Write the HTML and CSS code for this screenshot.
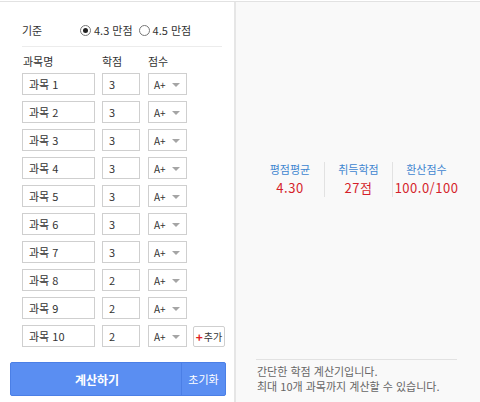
FILE: index.html
```html
<!DOCTYPE html>
<html lang="ko">
<head>
<meta charset="utf-8">
<link rel="stylesheet" href="styles.css">
</head>
<body>
<div class="wrap">
  <div class="left">
    <div class="basis">
      <span class="basis-label">기준</span>
      <span class="radio checked"></span><span class="radio-text">4.3 만점</span>
      <span class="radio"></span><span class="radio-text">4.5 만점</span>
    </div>
    <div class="heads">
      <span class="h-name">과목명</span>
      <span class="h-credit">학점</span>
      <span class="h-grade">점수</span>
    </div>
    <div class="rows">
      <div class="row"><div class="inp name">과목 1</div><div class="inp credit">3</div><div class="sel">A+<span class="caret"></span></div></div>
      <div class="row"><div class="inp name">과목 2</div><div class="inp credit">3</div><div class="sel">A+<span class="caret"></span></div></div>
      <div class="row"><div class="inp name">과목 3</div><div class="inp credit">3</div><div class="sel">A+<span class="caret"></span></div></div>
      <div class="row"><div class="inp name">과목 4</div><div class="inp credit">3</div><div class="sel">A+<span class="caret"></span></div></div>
      <div class="row"><div class="inp name">과목 5</div><div class="inp credit">3</div><div class="sel">A+<span class="caret"></span></div></div>
      <div class="row"><div class="inp name">과목 6</div><div class="inp credit">3</div><div class="sel">A+<span class="caret"></span></div></div>
      <div class="row"><div class="inp name">과목 7</div><div class="inp credit">3</div><div class="sel">A+<span class="caret"></span></div></div>
      <div class="row"><div class="inp name">과목 8</div><div class="inp credit">2</div><div class="sel">A+<span class="caret"></span></div></div>
      <div class="row"><div class="inp name">과목 9</div><div class="inp credit">2</div><div class="sel">A+<span class="caret"></span></div></div>
      <div class="row"><div class="inp name">과목 10</div><div class="inp credit">2</div><div class="sel">A+<span class="caret"></span></div><div class="add"><span class="plus">+</span>추가</div></div>
    </div>
    <div class="btns">
      <div class="calc">계산하기</div>
      <div class="reset">초기화</div>
    </div>
  </div>
  <div class="right">
    <div class="stats">
      <div class="stat"><div class="s-label">평점평균</div><div class="s-val">4.30</div></div>
      <div class="stat"><div class="s-label">취득학점</div><div class="s-val">27점</div></div>
      <div class="stat"><div class="s-label">환산점수</div><div class="s-val">100.0/100</div></div>
    </div>
    <div class="foot">
      <p>간단한 학점 계산기입니다.</p>
      <p>최대 10개 과목까지 계산할 수 있습니다.</p>
    </div>
  </div>
</div>
</body>
</html>
```

FILE: styles.css
```css
* { box-sizing: border-box; }
html, body { margin: 0; padding: 0; background: #fff; }
body {
  font-family: "Noto Sans CJK KR", "Noto Sans", sans-serif;
  font-size: 11px;
  color: #333;
  padding-top: 1px;
}
.wrap {
  display: flex;
  width: 480px;
  height: 401px;
  border-top: 1px solid #e2e2e2;
}
.left {
  width: 237px;
  border-right: 2px solid #e6e6e6;
  padding: 0 0 0 10px;
  display: flex;
  flex-direction: column;
}
.basis {
  display: flex;
  align-items: center;
  height: 22px;
  margin-top: 17px;
  margin-left: 12px;
  margin-right: 12px;
}
.basis-label { width: 58px; }
.radio {
  width: 11px; height: 11px;
  border: 1px solid #777;
  border-radius: 50%;
  margin-right: 3px;
  display: inline-flex;
  align-items: center;
  justify-content: center;
  background: #fff;
}
.radio.checked::after {
  content: "";
  width: 5px; height: 5px; border-radius: 50%;
  background: #222;
}
.radio-text { margin-right: 6px; }
.heads {
  margin: 5px 12px 0 12px;
  border-top: 1px solid #ececec;
  padding-top: 6px;
  height: 27px;
  display: flex;
}
.h-name { width: 80px; padding-left: 1px; }
.h-credit { width: 46px; }
.rows {
  display: flex;
  flex-direction: column;
  gap: 6px;
  margin-left: 12px;
}
.row { display: flex; height: 22px; align-items: center; }
.inp, .sel {
  height: 22px;
  border: 1px solid #cfcfcf;
  background: #fff;
  padding-left: 6px;
  display: flex;
  align-items: center;
  color: #333;
}
.name { width: 73px; margin-right: 7px; }
.credit { width: 38px; margin-right: 8px; }
.sel { width: 39px; position: relative; padding-left: 5px; font-size: 10px; }
.caret {
  position: absolute;
  right: 6px; top: 9px;
  width: 0; height: 0;
  border-left: 4px solid transparent;
  border-right: 4px solid transparent;
  border-top: 4px solid #a5a5a5;
}
.add {
  margin-left: 6px;
  height: 21px;
  width: 32px;
  border: 1px solid #cfcfcf;
  border-radius: 2px;
  display: flex;
  align-items: center;
  justify-content: center;
  font-size: 10px;
  background: #fff;
}
.plus { color: #e02020; font-weight: bold; font-size: 12px; margin-right: 1px; }
.btns {
  margin-top: 15px;
  display: flex;
  width: 216px;
  height: 34px;
  background: #5a8ef2;
  border: 1px solid #4b7fe6;
  border-radius: 2px;
  color: #fff;
}
.calc {
  flex: 1;
  display: flex; align-items: center; justify-content: center;
  font-weight: bold;
  font-size: 12px;
  padding-left: 2px;
}
.reset {
  width: 44px;
  border-left: 1px solid #4b7fe6;
  display: flex; align-items: center; justify-content: center;
  font-size: 11px;
}
.right {
  flex: 1;
  background: #f9f9f9;
  display: flex;
  flex-direction: column;
  padding: 0 20px;
}
.stats {
  display: flex;
  justify-content: center;
  margin-top: 160px;
}
.stat {
  width: 68px;
  text-align: center;
  border-left: 1px solid #e2e2e2;
  height: 35px;
}
.stat:first-child { border-left: none; }
.s-label { color: #3f86d0; font-size: 11px; line-height: 15px; }
.s-val { color: #d51f2b; font-size: 13px; line-height: 21px; letter-spacing: 0.5px; }
.foot {
  margin-top: auto;
  margin-bottom: 8px;
  margin-right: 3px;
  border-top: 1px solid #e2e2e2;
  padding-top: 4px;
  color: #666;
  font-size: 11px;
  line-height: 15px;
  padding-left: 1px;
}
.foot p { margin: 0; }
```
